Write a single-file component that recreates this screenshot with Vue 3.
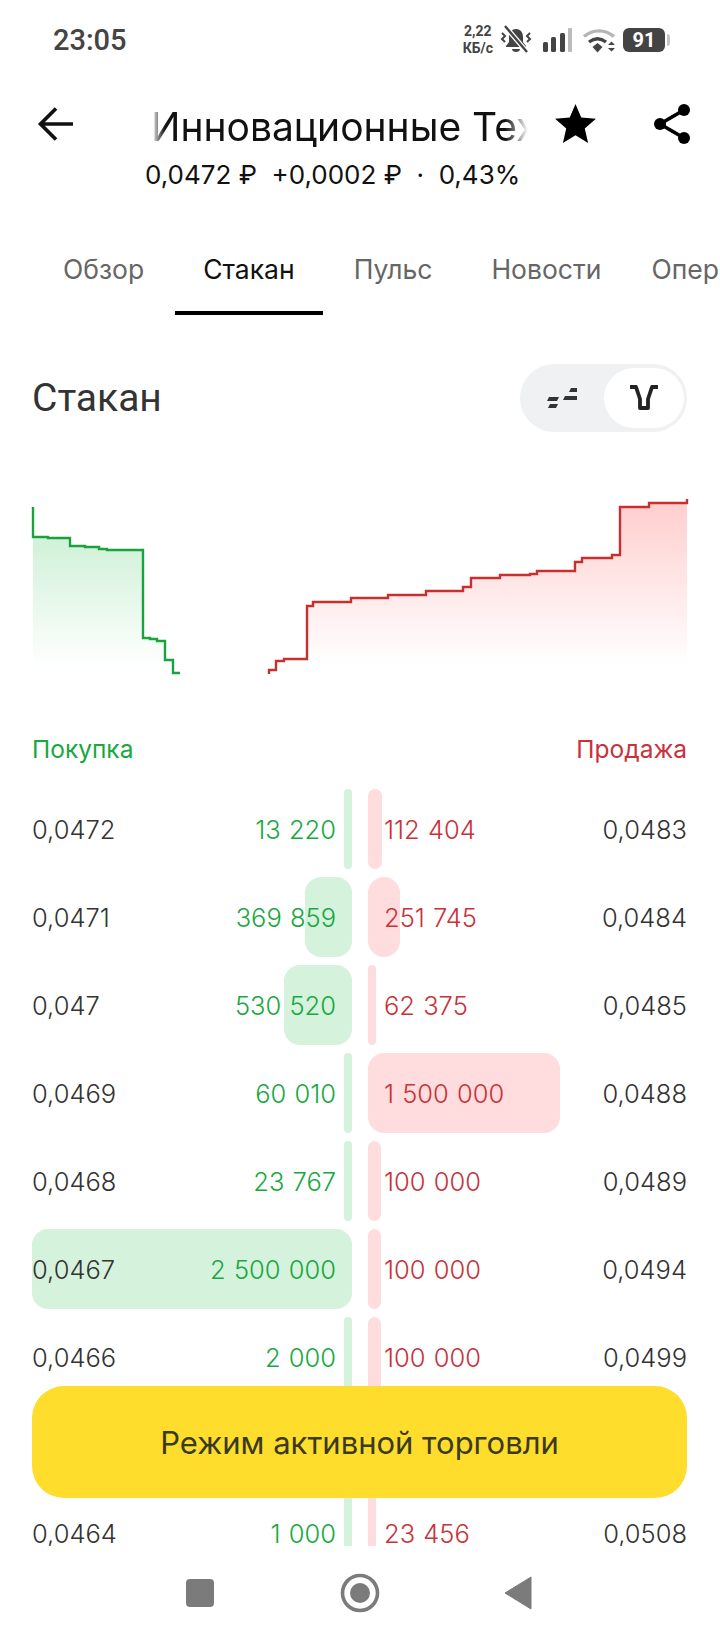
<template>
  <div class="screen">
    <div class="status">
      <span class="time">23:05</span>
      <div class="status-icons">
        <div class="speed"><span>2,22</span><span>КБ/с</span></div>
        <svg class="bell" width="34" height="30" viewBox="0 0 34 30">
          <path d="M17 4c-5 0-7 4-7 8v5l-3 4v1h20v-1l-3-4v-5c0-4-2-8-7-8z" fill="#444" />
          <path d="M13 24h8c0 2-2 3-4 3s-4-1-4-3z" fill="#444" />
          <path d="M6 1l22 26" stroke="#fff" stroke-width="5" />
          <path d="M6 1l22 26" stroke="#444" stroke-width="2.4" />
          <path d="M3 8l3 3-3 3 3 3M31 8l-3 3 3 3-3 3" fill="none" stroke="#444" stroke-width="2" />
        </svg>
        <svg class="signal" width="29" height="24" viewBox="0 0 29 24">
          <rect x="0" y="14" width="5" height="10" rx="1.5" fill="#444" />
          <rect x="8" y="9" width="5" height="15" rx="1.5" fill="#444" />
          <rect x="17" y="5" width="5" height="19" rx="1.5" fill="#444" />
          <rect x="25" y="0" width="4" height="24" rx="1" fill="#bbb" />
        </svg>
        <svg class="wifi" width="34" height="25" viewBox="0 0 34 25">
          <path d="M2 8.500C11 1 23 1 32 8.500" fill="none" stroke="#b5b5b5" stroke-width="3.400" />
          <path d="M7 14c6-4.500 11-4.500 17 0" fill="none" stroke="#444" stroke-width="3.400" />
          <path d="M10.500 19l5-4 5 4-5 5.500z" fill="#444" />
          <path d="M26 17l3.500-3.500 3.500 3.500zM26 20l3.500 3.500 3.500-3.500z" fill="#444" />
        </svg>
        <div class="battery"><span>91</span></div>
      </div>
    </div>

    <div class="header">
      <svg class="back" width="40" height="40" viewBox="0 0 40 40">
        <path d="M37 20H6M20 4.500 4.500 20 20 35.500" fill="none" stroke="#111" stroke-width="3.600" />
      </svg>
      <div class="title"><span>Инновационные Технологии</span></div>
      <svg class="star" width="49" height="49" viewBox="0 0 24 24">
        <path d="M12 17.270 18.180 21l-1.640-7.030L22 9.240l-7.190-.61L12 2 9.190 8.630 2 9.240l5.460 4.730L5.820 21z" fill="#000" />
      </svg>
      <svg class="share" width="44" height="44" viewBox="0 0 44 44">
        <path d="M34 8 10 22l24 14" fill="none" stroke="#000" stroke-width="3.600" />
        <circle cx="34" cy="8" r="6" />
        <circle cx="10" cy="22" r="6" />
        <circle cx="34" cy="36" r="6" />
      </svg>
    </div>
    <div class="quote">0,0472 ₽ &nbsp;+0,0002 ₽ &nbsp;·&nbsp; 0,43%</div>

    <div class="tabs">
      <div v-for="tab in tabs" :key="tab" :class="['tab', { active: tab === 'Стакан' }]">{{ tab }}</div>
    </div>

    <div class="section-head">
      <h2>Стакан</h2>
      <div class="toggle">
        <div class="toggle-off">
          <svg width="32" height="24" viewBox="0 0 32 24">
            <path d="M3 11h10l-2 4H1zM4 18h8l-2 4H2zM19 10h12v4H17zM25 2h6v4H23z" fill="#333" />
          </svg>
        </div>
        <div class="toggle-on">
          <svg width="30" height="28" viewBox="0 0 30 28">
            <path d="M1 3h6l4 12v9h8v-9l4-12h6" fill="none" stroke="#222" stroke-width="3.800" stroke-linejoin="round" />
          </svg>
        </div>
      </div>
    </div>

    <svg class="chart" width="720" height="210" viewBox="0 480 720 210">
      <defs>
        <linearGradient id="bidFill" gradientUnits="userSpaceOnUse" x1="0" y1="510" x2="0" y2="668">
          <stop offset="0" stop-color="#c6eecf" />
          <stop offset="1" stop-color="#ffffff" />
        </linearGradient>
        <linearGradient id="askFill" gradientUnits="userSpaceOnUse" x1="0" y1="505" x2="0" y2="665">
          <stop offset="0" stop-color="#ffcfcf" />
          <stop offset="1" stop-color="#ffffff" />
        </linearGradient>
      </defs>
      <path :d="bidLine + ' V690 H33 Z'" fill="url(#bidFill)" />
      <path :d="askLine + ' V690 H269 Z'" fill="url(#askFill)" />
      <path :d="bidLine" class="line" stroke="#19a23d" />
      <path :d="askLine" class="line" stroke="#c8302f" />
    </svg>

    <div class="sides">
      <span class="buy">Покупка</span>
      <span class="sell">Продажа</span>
    </div>

    <div class="book">
      <div v-for="(row, i) in rows" :key="i" class="row">
        <div class="half bid">
          <div class="bar bid-bar" :style="{ width: row.bidW + 'px' }"></div>
          <span class="price">{{ row.bid }}</span>
          <span class="amount buy">{{ row.bidQty }}</span>
        </div>
        <div class="half ask">
          <div class="bar ask-bar" :style="{ width: row.askW + 'px' }"></div>
          <span class="amount sell">{{ row.askQty }}</span>
          <span class="price">{{ row.ask }}</span>
        </div>
      </div>
    </div>

    <button class="trade">Режим активной торговли</button>

    <div class="nav">
      <div class="nav-square"></div>
      <svg width="40" height="40" viewBox="0 0 40 40">
        <circle cx="20" cy="20" r="17.500" fill="none" stroke="#7b7b7b" stroke-width="3.600" />
        <circle cx="20" cy="20" r="10" fill="#7b7b7b" />
      </svg>
      <svg width="28" height="34" viewBox="0 0 28 34">
        <path d="M27 1v32L1 17z" fill="#7b7b7b" stroke="#7b7b7b" stroke-linejoin="round" />
      </svg>
    </div>
  </div>
</template>

<script setup>
const tabs = ['Обзор', 'Стакан', 'Пульс', 'Новости', 'Операции']

const bidLine =
  'M33 507V537H48V538H70V546H85V547H99V549H107V550H143V638H150V639H157V641H165V660H173V673H180'
const askLine =
  'M269 674V670H276V661H284V659H307V606H313V602H351V598H388V595H426V591H455V591H463V587H471V578H500V575H530V574H537V571H575V562H582V558H612V555H620V507H649V503H687V499'

const rows = [
  { bid: '0,0472', bidQty: '13 220', bidW: 8, askQty: '112 404', ask: '0,0483', askW: 14 },
  { bid: '0,0471', bidQty: '369 859', bidW: 47, askQty: '251 745', ask: '0,0484', askW: 32 },
  { bid: '0,047', bidQty: '530 520', bidW: 68, askQty: '62 375', ask: '0,0485', askW: 8 },
  { bid: '0,0469', bidQty: '60 010', bidW: 8, askQty: '1 500 000', ask: '0,0488', askW: 192 },
  { bid: '0,0468', bidQty: '23 767', bidW: 8, askQty: '100 000', ask: '0,0489', askW: 13 },
  { bid: '0,0467', bidQty: '2 500 000', bidW: 320, askQty: '100 000', ask: '0,0494', askW: 13 },
  { bid: '0,0466', bidQty: '2 000', bidW: 8, askQty: '100 000', ask: '0,0499', askW: 13 },
  { bid: '', bidQty: '', bidW: 8, askQty: '', ask: '', askW: 8 },
  { bid: '0,0464', bidQty: '1 000', bidW: 8, askQty: '23 456', ask: '0,0508', askW: 8 },
]
</script>

<style scoped>
.screen {
  position: relative;
  width: 720px;
  height: 1640px;
  overflow: hidden;
  background: #fff;
  font-family: Inter, Roboto, sans-serif;
  color: #333;
}
.status {
  display: flex;
  align-items: center;
  justify-content: space-between;
  height: 80px;
  padding: 0 55px 0 53px;
  box-sizing: border-box;
}
.time {
  font-family: Roboto, sans-serif;
  font-size: 29px;
  font-weight: 500;
  color: #444;
}
.status-icons {
  display: flex;
  align-items: center;
}
.speed {
  display: flex;
  flex-direction: column;
  align-items: center;
  font-family: Roboto, sans-serif;
  font-size: 14px;
  line-height: 17px;
  font-weight: 700;
  color: #444;
}
.bell {
  margin-left: 6px;
}
.signal {
  margin-left: 10px;
}
.wifi {
  margin-left: 10px;
}
.battery {
  position: relative;
  margin-left: 7px;
  width: 42px;
  height: 24px;
  border-radius: 6px;
  background: #444;
  color: #fff;
  font-family: Roboto, sans-serif;
  font-size: 20px;
  line-height: 24px;
  font-weight: 700;
  text-align: center;
}
.battery::after {
  content: "";
  position: absolute;
  right: -5px;
  top: 6px;
  width: 3px;
  height: 12px;
  border-radius: 0 3px 3px 0;
  background: #c4c4c4;
}
.header {
  display: flex;
  align-items: center;
  height: 48px;
  margin-top: 20px;
  padding-left: 36px;
}
.title {
  width: 377px;
  margin-left: 75px;
  margin-top: 6px;
  overflow: hidden;
  white-space: nowrap;
  font-size: 39px;
  line-height: 46px;
  color: #111;
  -webkit-mask-image: linear-gradient(90deg, transparent 0, #000 14px, #000 354px, transparent 377px);
  mask-image: linear-gradient(90deg, transparent 0, #000 14px, #000 354px, transparent 377px);
}
.star {
  margin-left: 23px;
}
.share {
  margin-left: 50px;
}
.quote {
  height: 36px;
  margin-top: 9px;
  padding-left: 145px;
  font-size: 26px;
  line-height: 36px;
  color: #111;
  white-space: nowrap;
}
.tabs {
  display: flex;
  gap: 3px;
  height: 94px;
  margin-top: 28px;
  padding-left: 35px;
  white-space: nowrap;
}
.tab {
  box-sizing: border-box;
  height: 94px;
  padding: 30px 28px 0;
  font-size: 26.5px;
  line-height: 36px;
  color: #666;
}
.tab:last-child {
  margin-left: -9px;
}
.tab.active {
  color: #111;
  border-bottom: 4px solid #000;
}
.section-head {
  display: flex;
  align-items: center;
  justify-content: space-between;
  height: 68px;
  margin-top: 49px;
  padding: 0 33px 0 32px;
}
h2 {
  margin: 0;
  font-family: Roboto, sans-serif;
  font-size: 39px;
  font-weight: 400;
  color: #333;
}
.toggle {
  display: flex;
  box-sizing: border-box;
  width: 167px;
  height: 68px;
  padding: 4px 3px 4px 0;
  border-radius: 34px;
  background: #eff1f3;
}
.toggle-off,
.toggle-on {
  display: flex;
  align-items: center;
  justify-content: center;
}
.toggle-off {
  width: 84px;
}
.toggle-on {
  width: 80px;
  border-radius: 30px;
  background: #fff;
}
.chart {
  display: block;
  margin-top: 48px;
}
.line {
  fill: none;
  stroke-width: 2.4;
}
.sides {
  display: flex;
  justify-content: space-between;
  height: 36px;
  margin-top: 41px;
  padding: 0 33px 0 32px;
  font-size: 24.5px;
  line-height: 36px;
}
.buy {
  color: #19a83f;
}
.sell {
  color: #c9323a;
}
.book {
  margin-top: 22px;
}
.row {
  display: flex;
  gap: 16px;
  height: 80px;
  margin-bottom: 8px;
  padding: 0 33px 0 32px;
  font-size: 25.5px;
  font-weight: 350;
}
.half {
  position: relative;
  display: flex;
  align-items: center;
  justify-content: space-between;
  box-sizing: border-box;
}
.half span {
  position: relative;
}
.amount {
  word-spacing: 1px;
}
.bid {
  width: 320px;
  padding-right: 16px;
}
.ask {
  width: 319px;
  padding-left: 16px;
}
.bar {
  position: absolute;
  top: 0;
  bottom: 0;
  border-radius: 16px;
}
.bid-bar {
  right: 0;
  background: #d5f2dc;
}
.ask-bar {
  left: 0;
  background: #ffdcdd;
}
.price {
  color: #333;
}
.trade {
  position: absolute;
  left: 32px;
  top: 1386px;
  width: 655px;
  height: 112px;
  border: none;
  border-radius: 32px;
  background: #ffdd2d;
  color: #3a3a1e;
  font-family: inherit;
  font-size: 31px;
}
.nav {
  position: absolute;
  left: 0;
  right: 0;
  bottom: 0;
  display: flex;
  align-items: center;
  height: 94px;
  padding: 0 0 1px 186px;
  box-sizing: border-box;
  background: #fff;
}
.nav-square {
  width: 28px;
  height: 28px;
  border-radius: 4px;
  background: #7b7b7b;
}
.nav svg:nth-child(2) {
  margin-left: 126px;
}
.nav svg:nth-child(3) {
  margin-left: 124px;
}
</style>
